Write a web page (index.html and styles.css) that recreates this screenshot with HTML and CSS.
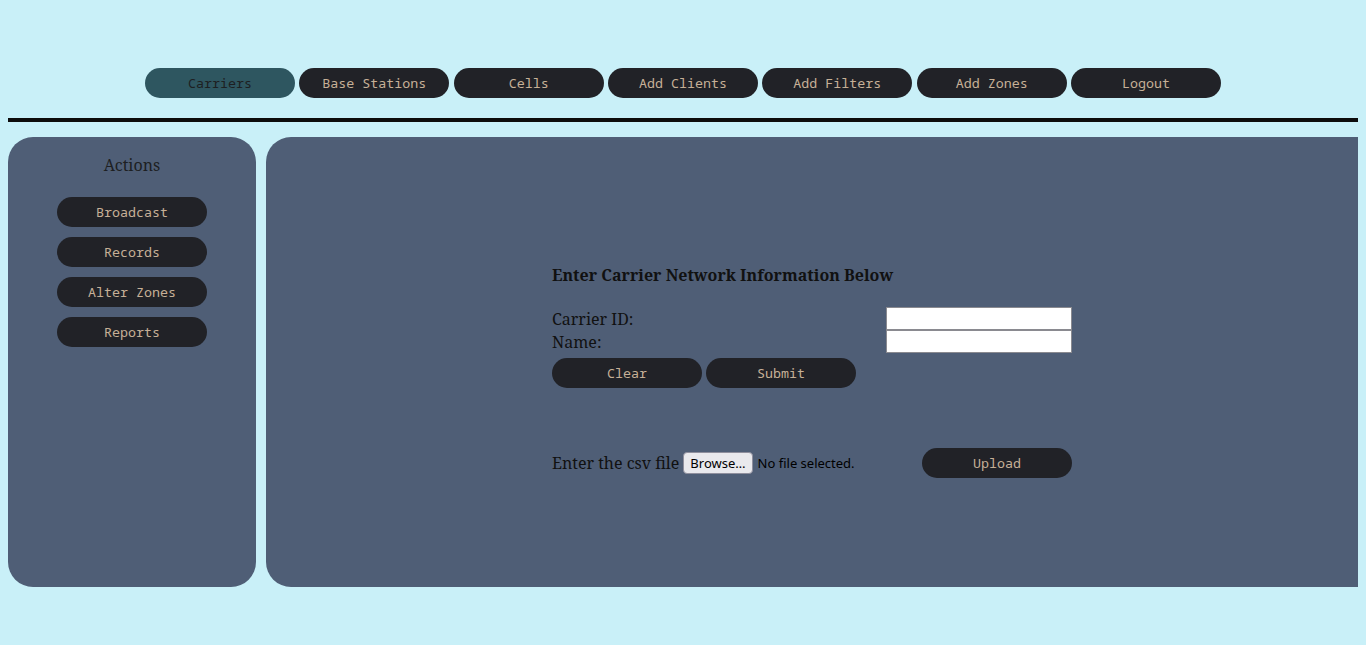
FILE: index.html
```html
<!DOCTYPE html>
<html>
<head>
<meta charset="utf-8">
<link rel="stylesheet" href="styles.css">
</head>
<body>
<nav class="topnav">
  <button class="pill active">Carriers</button>
  <button class="pill">Base Stations</button>
  <button class="pill">Cells</button>
  <button class="pill">Add Clients</button>
  <button class="pill">Add Filters</button>
  <button class="pill">Add Zones</button>
  <button class="pill">Logout</button>
</nav>
<div class="rule"></div>
<div class="content">
  <aside class="sidebar">
    <div class="side-title">Actions</div>
    <div class="side-buttons">
      <button class="pill">Broadcast</button>
      <button class="pill">Records</button>
      <button class="pill">Alter Zones</button>
      <button class="pill">Reports</button>
    </div>
  </aside>
  <main class="main">
    <div class="form">
      <div class="form-title">Enter Carrier Network Information Below</div>
      <div class="fields">
        <div class="field"><span class="label">Carrier ID:</span><input class="text" type="text"></div>
        <div class="field"><span class="label">Name:</span><input class="text" type="text"></div>
      </div>
      <div class="form-buttons">
        <button class="pill">Clear</button>
        <button class="pill">Submit</button>
      </div>
      <div class="upload-row">
        <div class="file">
          <span class="file-label">Enter the csv file</span>
          <span class="browse">Browse…</span>
          <span class="nofile">No file selected.</span>
        </div>
        <button class="pill">Upload</button>
      </div>
    </div>
  </main>
</div>
</body>
</html>
```
FILE: styles.css
```css
body {
  margin: 8px;
  background: #c9f0f8;
  font-family: "Noto Serif", "DejaVu Serif", serif;
  color: #111;
}
.pill {
  width: 150px;
  height: 30px;
  border: none;
  border-radius: 15px;
  background: #212227;
  color: #c6b097;
  font-family: "Noto Sans Mono", "DejaVu Sans Mono", monospace;
  font-size: 13.33px;
  padding: 0;
  margin: 0;
}
.pill.active {
  background: #2e5660;
  color: #1d1f22;
}
.topnav {
  display: flex;
  justify-content: center;
  gap: 4.33px;
  padding-top: 60px;
}
.rule {
  margin-top: 20px;
  height: 4px;
  background: #0c0c0c;
}
.content {
  display: flex;
  gap: 10px;
  margin-top: 15px;
  height: 450px;
}
.sidebar {
  width: 248px;
  background: #4f5e76;
  border-radius: 25px;
  display: flex;
  flex-direction: column;
  align-items: center;
}
.side-title {
  margin-top: 16px;
  font-size: 16px;
  line-height: 24px;
  color: #1d1f22;
}
.side-buttons {
  margin-top: 20px;
  display: flex;
  flex-direction: column;
  gap: 10px;
}
.main {
  flex: 1;
  background: #4f5e76;
  border-radius: 25px 0 0 25px;
  display: flex;
  justify-content: center;
}
.form {
  width: 520px;
  padding-top: 128px;
}
.form-title {
  font-weight: bold;
  font-size: 16px;
  line-height: 20px;
}
.fields {
  margin-top: 22px;
  display: flex;
  flex-direction: column;
}
.field {
  display: flex;
  justify-content: space-between;
  align-items: center;
  height: 23px;
  font-size: 16px;
}
.text {
  width: 186px;
  height: 23px;
  box-sizing: border-box;
  border: 1px solid #8a8a90;
  background: #fff;
  margin: 0;
  padding: 0;
}
.form-buttons {
  margin-top: 5px;
  display: flex;
  gap: 4px;
}
.upload-row {
  margin-top: 60px;
  display: flex;
  justify-content: space-between;
  align-items: center;
}
.file {
  display: flex;
  align-items: center;
  font-size: 16px;
}
.browse {
  margin-left: 4px;
  height: 22px;
  box-sizing: border-box;
  padding: 0 6px;
  border: 1px solid #8f8f9d;
  border-radius: 4px;
  background: #e9e9ed;
  font-family: "Noto Sans", sans-serif;
  font-size: 13px;
  line-height: 20px;
  color: #000;
}
.nofile {
  margin-left: 5px;
  font-family: "Noto Sans", sans-serif;
  font-size: 13px;
  color: #000;
}
```
